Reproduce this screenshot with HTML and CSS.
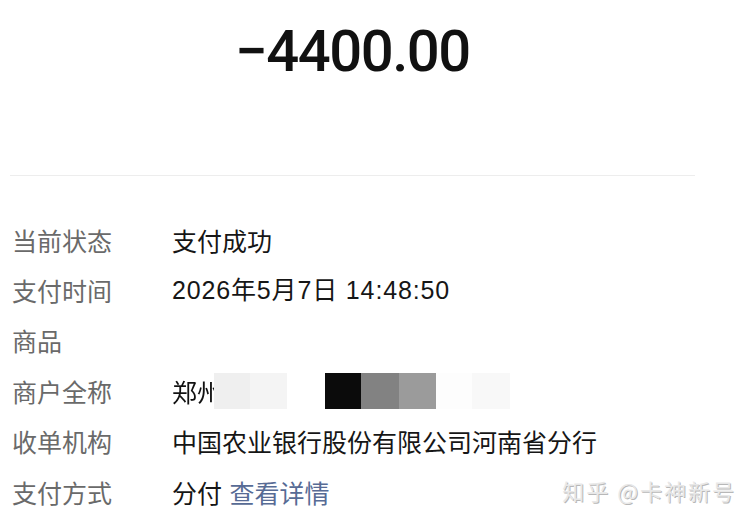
FILE: index.html
```
<!DOCTYPE html>
<html lang="zh-CN">

<head>
    <meta charset="UTF-8">
    <meta name="viewport" content="width=device-width, initial-scale=1.0">
    <title>账单详情</title>
    <link rel="stylesheet" href="styles.css">
</head>

<body>

    <div class="bill">
        <div class="amount">&minus;4400.00</div>
        <div class="divider"></div>

        <div class="rows">
            <div class="row">
                <span class="label">当前状态</span>
                <span class="value">支付成功</span>
            </div>
            <div class="row">
                <span class="label">支付时间</span>
                <span class="value num">2026年5月7日 14:48:50</span>
            </div>
            <div class="row">
                <span class="label">商品</span>
                <span class="value"></span>
            </div>
            <div class="row">
                <span class="label">商户全称</span>
                <span class="value masked">
                    <span class="masked-text">郑州市</span>
                    <!-- mosaic over the merchant name -->
                    <span class="mosaic">
                        <i class="m1"></i><i class="m2"></i><i class="gap"></i><i class="m3"></i><i class="m4"></i><i class="m5"></i><i class="m6"></i><i class="m7"></i>
                    </span>
                </span>
            </div>
            <div class="row">
                <span class="label">收单机构</span>
                <span class="value">中国农业银行股份有限公司河南省分行</span>
            </div>
            <div class="row">
                <span class="label">支付方式</span>
                <span class="value">分付 <a class="link" href="#">查看详情</a></span>
            </div>
        </div><!--rows end-->
    </div><!--bill end-->

    <div class="watermark">知乎 @卡神新号</div>

</body>

</html>
```

FILE: styles.css
```
body {
    margin: 0;
    height: 507px;
    overflow: hidden;
    background: #fff;
    font-family: "Noto Sans CJK SC", "Liberation Sans", sans-serif;
    position: relative;
}

.bill {
    width: 685px;
    padding: 16px 0 0 10px;
}

.amount {
    text-align: center;
    font-family: Roboto, "Liberation Sans", sans-serif;
    font-weight: 500;
    font-size: 58px;
    line-height: 70px;
    color: #111;
    letter-spacing: -1.5px;
}

.divider {
    height: 1px;
    background: #ededed;
    margin-top: 89px;
}

.rows {
    margin-top: 39px;
    padding-left: 2px;
}

.row {
    display: flex;
    align-items: center;
    height: 50.4px;
    font-size: 25px;
    line-height: 29px;
}

.label {
    width: 160px;
    color: #6a6a6a;
}

.value {
    color: #161616;
}

.num {
    font-family: "Liberation Sans", "Noto Sans CJK SC", sans-serif;
    letter-spacing: 0.85px;
}

.link {
    color: #576b95;
    text-decoration: none;
    margin-left: 2px;
}

.masked {
    position: relative;
    width: 340px;
    height: 36px;
    display: flex;
    align-items: center;
}

.masked-text {
    color: #111;
    filter: blur(0.4px);
}

.mosaic {
    position: absolute;
    left: 42px;
    top: 0;
    display: flex;
    height: 36px;
}

.mosaic i {
    display: block;
    width: 37px;
    height: 36px;
}

.mosaic .gap {
    width: 38px;
    background: #fff;
}

.mosaic .m1 { background: #efefef; width: 36px; }
.mosaic .m2 { background: #f4f4f4; }
.mosaic .m3 { background: #0b0b0b; width: 36px; }
.mosaic .m4 { background: #828282; width: 38px; }
.mosaic .m5 { background: #9b9b9b; }
.mosaic .m6 { background: #fdfdfd; width: 36px; }
.mosaic .m7 { background: #f8f8f8; width: 38px; }

.watermark {
    position: absolute;
    right: 20px;
    bottom: 3px;
    font-size: 22px;
    line-height: 28px;
    color: #e8e8e8;
    text-shadow: 1px 1px 0 #b8b8b8, -1px -1px 0 #fff;
    letter-spacing: 2px;
}
```
